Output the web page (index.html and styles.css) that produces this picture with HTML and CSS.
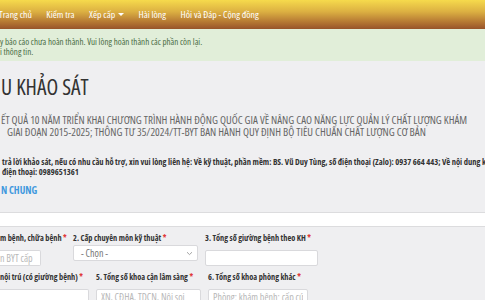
FILE: index.html
```html
<!DOCTYPE html>
<html lang="vi">
<head>
  <meta charset="UTF-8" />
  <meta name="viewport" content="width=device-width, initial-scale=1.0"/>
  <title>Phiếu khảo sát</title>
  <link rel="stylesheet" href="styles.css">
</head>
<body>
  <header class="topnav">
    <nav class="menu">
      <a href="#">Trang chủ</a>
      <a href="#">Kiểm tra</a>
      <a href="#">Xếp cấp <span class="caret"></span></a>
      <a href="#">Hài lòng</a>
      <a href="#">Hỏi và Đáp - Cộng đồng</a>
    </nav>
  </header>

  <div class="alert">
    <p>y báo cáo chưa hoàn thành. Vui lòng hoàn thành các phần còn lại.</p>
    <p>i thông tin.</p>
  </div>

  <main class="content">
    <h1 class="survey-title">U KHẢO SÁT</h1>
    <p class="survey-sub">
      <span class="line first">ẾT QUẢ 10 NĂM TRIỂN KHAI CHƯƠNG TRÌNH HÀNH ĐỘNG QUỐC GIA VỀ NÂNG CAO NĂNG LỰC QUẢN LÝ CHẤT LƯỢNG KHÁM</span>
      <span class="line indent">GIAI ĐOẠN 2015-2025; THÔNG TƯ 35/2024/TT-BYT BAN HÀNH QUY ĐỊNH BỘ TIÊU CHUẨN CHẤT LƯỢNG CƠ BẢN</span>
    </p>
    <p class="contact">
      <span class="line">trả lời khảo sát, nếu có nhu cầu hỗ trợ, xin vui lòng liên hệ: Về kỹ thuật, phần mềm: BS. Vũ Duy Tùng, số điện thoại (Zalo): 0937 664 443; Về nội dung khảo sát: ThS. Nguyễn Văn A,</span>
      <span class="line">điện thoại: 0989651361</span>
    </p>
    <h2 class="section-title">N CHUNG</h2>
  </main>

  <div class="panel-bar"></div>

  <section class="fields">
    <div class="field-row row-1">
      <div class="field">
        <label>m bệnh, chữa bệnh <span class="req">*</span></label>
        <input type="text" class="cut short" placeholder="n BYT cấp">
      </div>
      <div class="field">
        <label>2. Cấp chuyên môn kỹ thuật <span class="req">*</span></label>
        <div class="select">
          <span>- Chọn -</span>
          <svg width="7" height="5" viewBox="0 0 7 5"><path d="M1 1.2 3.5 3.6 6 1.2" fill="none" stroke="#999" stroke-width="0.9"/></svg>
        </div>
      </div>
      <div class="field">
        <label>3. Tổng số giường bệnh theo KH <span class="req">*</span></label>
        <input type="text">
      </div>
    </div>
    <div class="field-row row-2">
      <div class="field">
        <label>nội trú (có giường bệnh) <span class="req">*</span></label>
        <input type="text" class="cut">
      </div>
      <div class="field">
        <label>5. Tổng số khoa cận lâm sàng <span class="req">*</span></label>
        <input type="text" placeholder="XN, CĐHA, TDCN, Nội soi">
      </div>
      <div class="field">
        <label>6. Tổng số khoa phòng khác <span class="req">*</span></label>
        <input type="text" placeholder="Phòng: khám bệnh; cấp cứu; dược">
      </div>
    </div>
  </section>
</body>
</html>
```

FILE: styles.css
```css
  body {
    background-color: #efeff1;
    color: #333;
    font-family: "Open Sans", "Noto Sans", sans-serif;
    font-stretch: 78%;
    margin: 0;
    padding: 0;
    overflow: hidden;
  }
  p {
    margin: 0;
  }
  .line {
    display: block;
    white-space: nowrap;
  }

  /* top menu */
  .topnav {
    height: 29px;
    background: linear-gradient(to bottom, #f6da4c 0%, #dcb042 40%, #ae6e31 82%, #97532a 100%);
  }
  .menu {
    display: flex;
    gap: 14.5px;
    height: 100%;
    align-items: center;
    margin-left: -1px;
  }
  .menu a {
    color: #fff;
    text-decoration: none;
    font-size: 9.8px;
    padding-bottom: 1px;
    white-space: nowrap;
  }
  .caret {
    display: inline-block;
    width: 0;
    height: 0;
    border-left: 3px solid transparent;
    border-right: 3px solid transparent;
    border-top: 3px solid #fff;
    vertical-align: middle;
    margin-left: 1px;
  }

  /* message */
  .alert {
    background-color: #e1eed9;
    color: #4a6d45;
    font-size: 9px;
    line-height: 9.5px;
    padding: 8px 0 5px;
    height: 19px;
    white-space: nowrap;
  }

  .content {
    padding-left: 1px;
  }
  .survey-title {
    margin: 13px 0 0;
    font-size: 21.5px;
    line-height: 26px;
    font-weight: 400;
    color: #333;
  }
  .survey-sub {
    margin-top: 14px;
    font-size: 11px;
    line-height: 12px;
    color: #666;
  }
  .survey-sub .indent {
    padding-left: 6px;
  }
  .contact {
    margin-top: 19px;
    font-size: 8.5px;
    line-height: 10px;
    font-weight: 700;
    color: #333;
    padding-left: 1px;
  }
  .section-title {
    margin: 7px 0 0;
    font-size: 10px;
    line-height: 12px;
    font-weight: 700;
    color: #4199de;
  }

  .panel-bar {
    margin-top: 16px;
    height: 13px;
    background: #fff;
    border-top: 1px solid #dcdcde;
    border-bottom: 1px solid #dcdcde;
  }

  /* form */
  .fields {
    padding-top: 6px;
  }
  .field-row {
    display: grid;
    gap: 7px;
  }
  .row-1 {
    grid-template-columns: 66px 125px 113px;
  }
  .row-2 {
    margin-top: 5px;
    grid-template-columns: 89px 105px 100px;
  }
  .field label {
    display: block;
    font-size: 8.3px;
    line-height: 10px;
    font-weight: 700;
    color: #333;
    white-space: nowrap;
    margin-bottom: 2px;
  }
  .req {
    color: #e03a3a;
  }
  .field input,
  .select {
    box-sizing: border-box;
    width: 100%;
    height: 16px;
    border: 1px solid #d9d9dc;
    border-radius: 2px;
    background: #fff;
    font-family: inherit;
    font-stretch: 78%;
    font-size: 10px;
    padding: 0 4px;
    margin: 0;
  }
  .field input::placeholder {
    color: #b8b8b8;
  }
  .field input.cut {
    border-left: none;
    border-radius: 0 2px 2px 0;
    padding-left: 0;
  }
  .field input.short {
    width: 41px;
  }
  .select {
    display: flex;
    align-items: center;
    justify-content: space-between;
    padding: 0 4px 0 7px;
    color: #777;
  }
```
